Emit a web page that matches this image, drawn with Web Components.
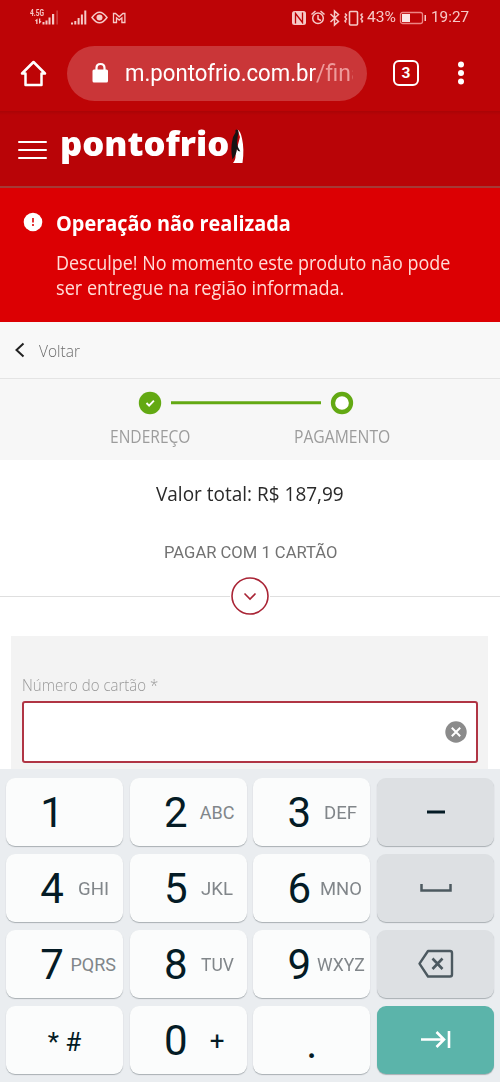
<!DOCTYPE html>
<html lang="pt-BR">
<head>
<meta charset="utf-8">
<title>Pontofrio - Pagamento</title>
<style>
body{margin:0;width:500px;height:1082px;overflow:hidden;background:#fff;font-family:Roboto,"Liberation Sans",sans-serif}
</style>
</head>
<body>
<phone-screen></phone-screen>
<script>
function define(name, html){
  const tpl=document.createElement('template');
  tpl.innerHTML=html;
  customElements.define(name,class extends HTMLElement{
    constructor(){super();this.attachShadow({mode:'open'}).appendChild(tpl.content.cloneNode(true));}
  });
}

// One line of text, condensed or widened to the width given in "w".
const lines=[];
customElements.define('fit-line',class extends HTMLElement{
  constructor(){
    super();
    this.attachShadow({mode:'open'}).innerHTML='<style>:host{display:block;white-space:nowrap;flex:none}span{display:inline-block;transform-origin:0 50%;line-height:inherit;vertical-align:top}</style><span><slot></slot></span>';
    lines.push(this);
  }
  connectedCallback(){this.style.width=this.getAttribute('w')+'px';}
  fit(){
    const s=this.shadowRoot.querySelector('span');
    s.style.transform='scaleX('+(this.getAttribute('w')/s.offsetWidth)+')';
  }
});

define('status-bar',`<style>
:host{display:flex;align-items:center;height:35px;box-sizing:border-box;background:#bd0406;color:#f6c9c7;font:14.5px/18px Roboto,sans-serif;padding-left:30px}
svg{display:block;flex:none}.net{display:grid;width:28px;height:17px;font:bold 8.500px/8px Roboto,sans-serif;grid-template:1fr/1fr}
.net>*{grid-area:1/1}
fit-line{padding-top:1px}.net fit-line{padding:0}
</style>
<div class="net"><fit-line w="14">4.5G</fit-line>
<svg width="28" height="17" fill="#f6c9c7"><path d="M5 11.500L7.500 9.500V15H6.200V12.500zM11.500 12.500L9 15V9.500h1.300V12zM12.500 13h2v2.500h-2zM15.500 11.500h2v4h-2zM18.500 8.500h2v7h-2zM22 5h2.200v10.500H22z"/><path opacity=".4" d="M26.500 1.500h1.200v14h-1.200z"/></svg></div>
<svg style="margin-left:13px" width="56" height="18" fill="#f6c9c7"><path d="M0 13.500h2v2H0zM3.300 12h2v3.500h-2zM6.600 9h2v6.500h-2zM9.900 5.500h2v10h-2zM13.300 1.500h2v14h-2z"/><g fill="none" stroke="#f6c9c7"><path stroke-width="1.500" d="M21 8.500q7.500-10.500 15 0q-7.500 10.500-15 0z"/><circle cx="28.500" cy="8.500" r="3" fill="#f6c9c7" stroke="none"/><path stroke-width="1.300" d="M42.500 13.500V4.500h2l3.700 3.300 3.700-3.300h2v9h-3V8.800l-2.700 2.300-2.700-2.300v4.700z"/></g></svg>
<svg style="margin-left:163px" width="74" height="18"><rect x="2" y="2" width="14" height="14" rx="2.500" fill="#f6c9c7"/><path d="M5.500 14.500V4.500l7 9v-10" fill="none" stroke="#bd0406" stroke-width="1.300"/><g fill="none" stroke="#f6c9c7" stroke-width="1.500"><circle cx="28" cy="9.300" r="5.300"/><path d="M28 6v4l3 1.500M21.500 5.500l4-3.500M34.500 5.500l-4-3.500M40.500 5l8 7.500-4 3.500V2l4 3.500-8 7.500"/><rect x="59.500" y="2.500" width="8" height="13.500" rx="1" stroke-width="1.600"/><path d="M55 4.500l1.500 1.500L55 8l1.500 2L55 12l1 1.500M72.500 4.500L71 6l1.500 2-1.500 2 1.500 2-1 1.500" stroke-width="1.500"/></g></svg>
<fit-line w="29" style="margin-left:3px">43%</fit-line>
<svg style="margin-left:3px" width="28" height="16"><rect x="1.500" y="2.500" width="22" height="11" rx="2" fill="none" stroke="#ed8583" stroke-width="1.300"/><path fill="#fbe5e4" d="M3 4h8v8H3z"/><path fill="#f6c9c7" d="M25.500 5h1.500v6h-1.500z"/></svg>
<fit-line w="38" style="margin-left:4px">19:27</fit-line>`);

define('browser-bar',`<style>
:host{display:flex;align-items:center;height:76px;background:#bd0406;box-sizing:border-box;padding:1px 0 1px 20px;color:#fff}
svg{display:block;flex:none}
.pill{display:flex;align-items:center;width:300px;height:55px;margin-left:20px;border-radius:28px;background:#ca3638;font:23px/30px Roboto,sans-serif;box-sizing:border-box;padding-left:25px}
.pill fit-line,.path{padding-top:2px}
.path{width:37px;overflow:hidden;color:#ee9a9a;-webkit-mask-image:linear-gradient(90deg,#000 88%,rgba(0,0,0,.4))}
.path fit-line{padding:0}
.tabs{width:26px;height:26px;box-sizing:border-box;border:2.500px solid #fff;border-radius:6px;margin-left:26px;font:bold 15.500px/22px Roboto,sans-serif;text-align:center}
</style>
<svg width="27" height="28" fill="none" stroke="#fff" stroke-width="2.500" stroke-linejoin="round"><path d="M2 14.500L13.500 3 25 14.500h-3.500V26h-16V14.500z"/></svg>
<div class="pill"><svg width="17" height="22"><path d="M4.500 9V6q0-4 4-4t4 4v3" fill="none" stroke="#fff" stroke-width="2.200"/><rect x=".5" y="7.500" width="15.500" height="13" rx="1.500" fill="#fff"/></svg>
<fit-line w="191" style="margin-left:16px">m.pontofrio.com.br</fit-line><div class="path"><fit-line w="47">/fina</fit-line></div></div>
<div class="tabs">3</div>
<svg style="margin-left:38px" width="8" height="26" fill="#fff"><circle cx="4" cy="4.500" r="3"/><circle cx="4" cy="13" r="3"/><circle cx="4" cy="21.500" r="3"/></svg>`);

define('site-header',`<style>
:host{display:flex;height:77px;box-sizing:border-box;background:linear-gradient(#a90406,#b90407 4px);border-bottom:2px solid #a43a35;padding-left:18px;color:#fff}
.menu{display:grid;gap:5.500px;width:29px;height:19px;margin-top:29.500px}.menu i{height:2.500px;background:#fff;border-radius:1px}
fit-line{margin:10px 0 0 13px;font:800 34px/44px "Open Sans",sans-serif}
svg{margin:17px 0 0 2px}
</style>
<div class="menu"><i></i><i></i><i></i></div><fit-line w="169">pontofrio</fit-line>
<svg width="14" height="37"><path fill="#fff" d="M6.500 1.500q3 1.500 4.500 9 2.500 11 .5 24.500H2q3-3 2.500-9L9 9z"/><path fill="#171313" d="M4.500 2Q7 .5 7.500 4q0 2-.8 4.500L6 15q.3 4 3.300 8.500-2.500 0-3.500-2.500Q5.500 27 1.500 31.500-.5 22 1 14 1.700 8 4.500 4.500z"/></svg>`);

define('error-alert',`<style>
:host{display:flex;height:134px;background:#dc0003;color:#fff;box-sizing:border-box;padding:21px 0 0 23px;font:20px/25px "Open Sans",sans-serif}
svg{flex:none;margin:3px 13px 0 0}.t{font-size:21px;line-height:28px;font-weight:700;margin-bottom:13px}
.m{color:#ffdcd7}
</style>
<svg width="20" height="20"><circle cx="10" cy="10" r="9.300" fill="#fff"/><path d="M10 6v4.500M10 12v2" stroke="#dc0003" stroke-width="1.600"/></svg>
<div><fit-line class="t" w="235">Operação não realizada</fit-line>
<fit-line class="m" w="394">Desculpe! No momento este produto não pode</fit-line>
<fit-line class="m" w="288">ser entregue na região informada.</fit-line></div>`);

define('back-link',`<style>
:host{display:flex;align-items:center;height:57px;box-sizing:border-box;background:#f8f8f8;border-bottom:1px solid #e4e4e4;padding-left:14px;color:#6c6c6c;font:300 17px/24px "Open Sans",sans-serif}
</style>
<svg width="12" height="18" style="margin:-1px 13px 0 0" fill="none" stroke="#222" stroke-width="2"><path d="M9.500 2.500L2.500 9l7 6.500"/></svg><fit-line w="41" style="padding-top:2px">Voltar</fit-line>`);

define('checkout-steps',`<style>
:host{display:grid;grid-template-columns:80px 96px;column-gap:104px;justify-content:center;grid-template-rows:24px 24px;row-gap:9px;height:81px;box-sizing:border-box;background:#f7f7f7;padding-top:12px;color:#9c9c9c;font:400 17.500px/24px "Open Sans",sans-serif}
svg{grid-column:1/3;margin-left:26px;display:block}
</style>
<svg width="220" height="24"><circle cx="14" cy="12" r="11.200" fill="#63a913"/><path d="M10.500 12l2.600 2.600 4.800-5" fill="none" stroke="#fff" stroke-width="1.900"/><path d="M35 11.700h150" stroke="#63a913" stroke-width="3"/><circle cx="206" cy="12" r="9" fill="#fff" stroke="#63a913" stroke-width="4.300"/></svg>
<fit-line w="80">ENDEREÇO</fit-line><fit-line w="96">PAGAMENTO</fit-line>`);

define('payment-summary',`<style>
:host{display:flex;flex-direction:column;align-items:center;height:176px;box-sizing:border-box;padding-top:20px;background:#fff}
.v{font:20px/28px "Open Sans",sans-serif;color:#292929}.p{font:16.500px/24px Roboto,sans-serif;color:#727272;margin-top:33px}
.d{display:flex;align-items:center;width:500px;margin-top:12px}.d i{flex:1;height:1px;background:#dfdfdf}.d svg{margin:0 1px}
</style>
<fit-line class="v" w="188">Valor total: R$ 187,99</fit-line>
<fit-line class="p" w="173">PAGAR COM 1 CARTÃO</fit-line>
<div class="d"><i></i><svg width="38" height="38" fill="none" stroke="#a92435" stroke-width="1.600"><circle cx="19" cy="19" r="18"/><path d="M13.500 16.500L19 22l5.500-5.500"/></svg><i></i></div>`);

define('card-form',`<style>
:host{display:block;margin:0 12px 0 11px;height:133px;background:#f3f3f3;box-sizing:border-box;padding:37px 10px 0 11px}
fit-line{font:300 17px/24px "Open Sans",sans-serif;color:#999}
.f{display:flex;align-items:center;justify-content:flex-end;height:62px;margin-top:4px;box-sizing:border-box;background:#fff;border:2px solid #b03544;border-radius:3px;padding-right:9.500px}
.f svg{margin-top:-1px}
</style>
<fit-line w="136">Número do cartão *</fit-line>
<div class="f"><svg width="22" height="22"><circle cx="11" cy="11" r="10.700" fill="#8b8b8b"/><path d="M6.800 6.800l8.400 8.400M15.200 6.800l-8.400 8.400" stroke="#fff" stroke-width="2"/></svg></div>`);

define('key-cap',`<style>
:host{display:grid;grid-template-columns:22px 48px 3px 1fr;align-items:center;height:68px;box-sizing:border-box;border-radius:9px;background:#fbfcfc;box-shadow:0 1px 1px #a9afb3;color:#041b25;font:42px/50px Roboto,sans-serif}
:host([tone]){background:#dde0e3;grid-template-columns:1fr;justify-items:center}
:host([tone=go]){background:#5bb4aa}
.d{grid-column:2;text-align:center;padding-top:2px}
.l{display:flex;justify-content:center;width:29px;font-size:18.500px;line-height:24px;color:#81868a;white-space:nowrap;grid-column:4;padding-top:1px}
:host([wide]) .l,:host([dot]) .l{display:none}
:host([wide]) .d{grid-column:1/5;white-space:pre;font-size:26px;line-height:30px;padding-top:3px}
:host([dot]) .d{grid-column:1/5;padding-top:7px}
:host([plus]) .l{color:#041b25;font-size:26px;padding-top:1px}
:host([tone]) .d{grid-column:1;padding:0}:host([tone]) .l{display:none}
::slotted(svg){display:block}
</style><div class="d"><slot></slot></div><div class="l"><slot name="letters"></slot></div>`);

define('numeric-keypad',`<style>
:host{display:grid;grid-template-columns:repeat(4,117px);grid-auto-rows:68px;column-gap:6.700px;row-gap:8px;height:313px;box-sizing:border-box;padding:9px 6px 0;background:#eaedf0}
fit-line{font-size:18px}
</style>
<key-cap>1</key-cap>
<key-cap>2<fit-line slot="letters" w="35">ABC</fit-line></key-cap>
<key-cap>3<fit-line slot="letters" w="33">DEF</fit-line></key-cap>
<key-cap tone="gray"><svg width="18" height="4"><path fill="#041b25" d="M0 .5h18v3H0z"/></svg></key-cap>
<key-cap>4<fit-line slot="letters" w="31">GHI</fit-line></key-cap>
<key-cap>5<fit-line slot="letters" w="32">JKL</fit-line></key-cap>
<key-cap>6<fit-line slot="letters" w="42">MNO</fit-line></key-cap>
<key-cap tone="gray"><svg width="32" height="10"><path fill="none" stroke="#4c5960" stroke-width="2.500" d="M1.500 1v6.500h29V1"/></svg></key-cap>
<key-cap>7<fit-line slot="letters" w="46">PQRS</fit-line></key-cap>
<key-cap>8<fit-line slot="letters" w="33">TUV</fit-line></key-cap>
<key-cap>9<fit-line slot="letters" w="48">WXYZ</fit-line></key-cap>
<key-cap tone="gray"><svg width="36" height="30" fill="none" stroke="#4c5960" stroke-width="2.400" stroke-linejoin="round"><path d="M10 2h22q2 0 2 2v21.500q0 2-2 2H10L1.500 14.700z"/><path d="M14.500 9.500l10 10.500M24.500 9.500l-10 10.500" stroke-width="2.600"/></svg></key-cap>
<key-cap wide>* #</key-cap>
<key-cap plus>0<span slot="letters">+</span></key-cap>
<key-cap dot>.</key-cap>
<key-cap tone="go"><svg width="32" height="20" fill="none" stroke="#fff" stroke-width="2.600"><path d="M1 9.500h23M16.500 2l7.500 7.500-7.500 7.500M29 1v17"/></svg></key-cap>`);

define('phone-screen',`<style>:host{display:block;width:500px;height:1082px;overflow:hidden}</style>
<status-bar></status-bar><browser-bar></browser-bar><site-header></site-header><error-alert></error-alert>
<back-link></back-link><checkout-steps></checkout-steps><payment-summary></payment-summary><card-form></card-form><numeric-keypad></numeric-keypad>`);
lines.forEach(l=>l.isConnected&&l.fit());
</script>
</body>
</html>
